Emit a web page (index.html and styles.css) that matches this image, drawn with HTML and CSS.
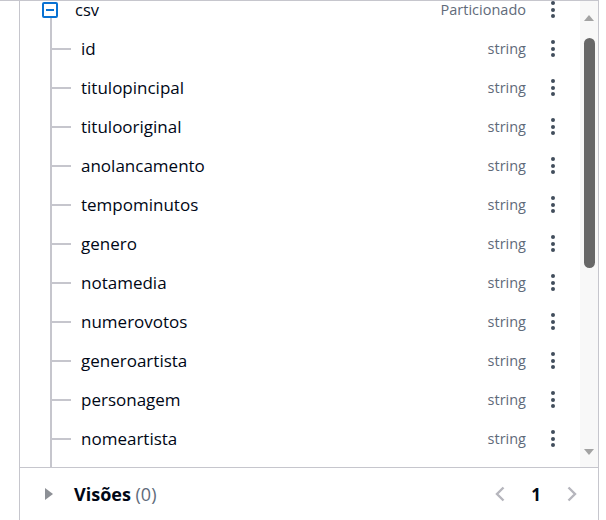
FILE: index.html
```html
<!DOCTYPE html>
<html lang="pt">
<head>
<meta charset="utf-8">
<title>csv</title>
<link rel="stylesheet" href="styles.css">
</head>
<body>
<div class="frame">
  <div class="panel">
    <div class="scroller">
      <div class="viewport">
        <div class="tree">
          <div class="row root-row">
            <span class="toggle"><span class="minus"></span></span>
            <span class="name root-name">csv</span>
            <span class="type">Particionado</span>
            <span class="kebab"><i></i><i></i><i></i></span>
          </div>
          <div class="children">
            <div class="row child"><span class="branch"></span><span class="name">id</span><span class="type">string</span><span class="kebab"><i></i><i></i><i></i></span></div>
            <div class="row child"><span class="branch"></span><span class="name">titulopincipal</span><span class="type">string</span><span class="kebab"><i></i><i></i><i></i></span></div>
            <div class="row child"><span class="branch"></span><span class="name">titulooriginal</span><span class="type">string</span><span class="kebab"><i></i><i></i><i></i></span></div>
            <div class="row child"><span class="branch"></span><span class="name">anolancamento</span><span class="type">string</span><span class="kebab"><i></i><i></i><i></i></span></div>
            <div class="row child"><span class="branch"></span><span class="name">tempominutos</span><span class="type">string</span><span class="kebab"><i></i><i></i><i></i></span></div>
            <div class="row child"><span class="branch"></span><span class="name">genero</span><span class="type">string</span><span class="kebab"><i></i><i></i><i></i></span></div>
            <div class="row child"><span class="branch"></span><span class="name">notamedia</span><span class="type">string</span><span class="kebab"><i></i><i></i><i></i></span></div>
            <div class="row child"><span class="branch"></span><span class="name">numerovotos</span><span class="type">string</span><span class="kebab"><i></i><i></i><i></i></span></div>
            <div class="row child"><span class="branch"></span><span class="name">generoartista</span><span class="type">string</span><span class="kebab"><i></i><i></i><i></i></span></div>
            <div class="row child"><span class="branch"></span><span class="name">personagem</span><span class="type">string</span><span class="kebab"><i></i><i></i><i></i></span></div>
            <div class="row child"><span class="branch"></span><span class="name">nomeartista</span><span class="type">string</span><span class="kebab"><i></i><i></i><i></i></span></div>
          </div>
        </div>
      </div>
      <div class="scrollbar">
        <span class="arrow up"></span>
        <span class="thumb"></span>
        <span class="arrow down"></span>
      </div>
    </div>
    <div class="footer">
      <span class="caret"></span>
      <span class="views"><b>Visões</b> <span class="count">(0)</span></span>
      <div class="pager">
        <svg class="chev" width="12" height="16" viewBox="0 0 12 16"><path d="M9.5 1.5 L3 8 L9.5 14.5" fill="none" stroke="#b6b6bd" stroke-width="2.4"/></svg>
        <span class="page">1</span>
        <svg class="chev" width="12" height="16" viewBox="0 0 12 16"><path d="M2.5 1.5 L9 8 L2.5 14.5" fill="none" stroke="#b6b6bd" stroke-width="2.4"/></svg>
      </div>
    </div>
  </div>
</div>
</body>
</html>
```

FILE: styles.css
```css
* { box-sizing: border-box; }
html, body { margin: 0; padding: 0; background: #ffffff; }
body {
  font-family: "Open Sans", "Noto Sans", sans-serif;
  color: #000716;
}
.frame {
  width: 599px;
  border-top: 1px solid #c6c6cd;
}
.panel {
  margin-left: 19px;
  width: 580px;
  border-left: 1px solid #c6c6cd;
  border-right: 1px solid #c6c6cd;
}
.scroller {
  height: 466px;
  display: flex;
}
.viewport {
  flex: 1;
  overflow: hidden;
}
.tree {
  margin-top: -11px;
}
.row {
  height: 39px;
  display: flex;
  align-items: center;
}
.root-row {
  padding-left: 22px;
}
.toggle {
  width: 16px;
  height: 16px;
  border: 2px solid #0972d3;
  border-radius: 2px;
  display: flex;
  align-items: center;
  justify-content: center;
}
.minus {
  width: 8px;
  height: 2px;
  background: #0972d3;
}
.name {
  font-size: 17px;
  line-height: 22px;
  margin-left: 10px;
}
.root-name {
  font-size: 16.5px;
  line-height: 16px;
  margin-left: 17px;
}
.type {
  margin-left: auto;
  font-size: 14.5px;
  line-height: 16px;
  color: #5f6b7a;
}
.kebab {
  width: 26px;
  margin-left: 14px;
  margin-right: 14px;
  display: flex;
  flex-direction: column;
  align-items: center;
  gap: 2.5px;
}
.kebab i {
  width: 4px;
  height: 4px;
  border-radius: 50%;
  background: #414d5c;
}
.children {
  margin-left: 30px;
  margin-top: -11px;
  padding-top: 11px;
  padding-bottom: 20px;
  border-left: 2px solid #c6c6cd;
}
.branch {
  width: 19px;
  height: 2px;
  background: #c6c6cd;
}
.scrollbar {
  width: 18px;
  background: #f8f8f8;
  display: flex;
  flex-direction: column;
  align-items: center;
  padding-top: 14px;
  padding-bottom: 12px;
}
.arrow {
  width: 0;
  height: 0;
  border-left: 5.5px solid transparent;
  border-right: 5.5px solid transparent;
}
.arrow.up { border-bottom: 6px solid #a3a3a3; }
.arrow.down { border-top: 6px solid #a3a3a3; margin-top: auto; }
.thumb {
  margin-top: 17px;
  width: 11px;
  height: 230px;
  border-radius: 6px;
  background: #686868;
}
.footer {
  height: 53px;
  border-top: 1px solid #c6c6cd;
  display: flex;
  align-items: center;
  padding-left: 25px;
  padding-right: 20px;
}
.caret {
  width: 0;
  height: 0;
  border-left: 8px solid #8d9096;
  border-top: 6px solid transparent;
  border-bottom: 6px solid transparent;
}
.views {
  margin-left: 21px;
  font-size: 18px;
}
.views b { font-weight: 700; }
.count { color: #5f6b7a; font-size: 18px; }
.pager {
  margin-left: auto;
  display: flex;
  align-items: center;
}
.page {
  font-size: 17px;
  font-weight: 700;
  margin: 0 25px;
}
.chev { display: block; }
```
